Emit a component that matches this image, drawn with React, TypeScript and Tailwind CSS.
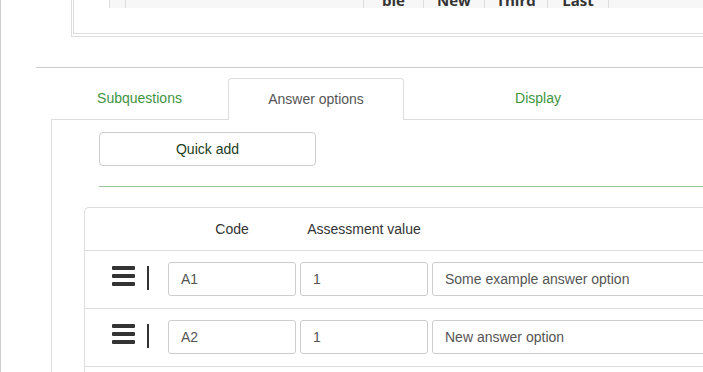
import React from "react"

const headCols = [
  { w: "w-[16px]", label: "" },
  { w: "w-[238px]", label: "" },
  { w: "w-[60px]", label: "ble" },
  { w: "w-[61px]", label: "New" },
  { w: "w-[63px]", label: "Third" },
  { w: "w-[61px]", label: "Last" },
]

const rows = [
  { code: "A1", value: "1", text: "Some example answer option" },
  { code: "A2", value: "1", text: "New answer option" },
]

function DragHandle() {
  return (
    <div className="flex items-center shrink-0 w-[79px] pl-[27px] gap-[12px]">
      <div className="flex flex-col gap-[4px] w-[23px]">
        <div className="h-[4px] bg-[#333] rounded-[1px]" />
        <div className="h-[4px] bg-[#333] rounded-[1px]" />
        <div className="h-[4px] bg-[#333] rounded-[1px]" />
      </div>
      <div className="w-[2px] h-[24px] bg-[#333] mt-[4px]" />
    </div>
  )
}

function Field({ value, width }: { value: string; width: string }) {
  return (
    <div
      className={`${width} h-[34px] shrink-0 border border-[#ccc] rounded-[3px] px-[12px] flex items-center text-[14px] text-[#555]`}
    >
      {value}
    </div>
  )
}

export default function App() {
  return (
    <div className="w-[703px] h-[372px] overflow-hidden bg-white border-l border-[#ccc] font-['Liberation_Sans',Arial,sans-serif]">
      {/* top question table box */}
      <div className="ml-[70px] h-[37px] border-l border-b border-[#ddd] pl-px pb-[2px]">
        <div className="h-full border-l border-b border-[#ddd] flex">
          <div className="w-[35px] shrink-0" />
          <div className="flex-1 h-[8px] overflow-hidden bg-[#f7f7f7] flex font-['Open_Sans',sans-serif] font-bold text-[15px] text-[#333]">
            {headCols.map((c, i) => (
              <div
                key={i}
                className={`${c.w} shrink-0 h-full border-l border-[#ddd] flex items-end justify-center leading-none`}
              >
                {c.label}
              </div>
            ))}
            <div className="flex-1 border-l border-[#ddd]" />
          </div>
        </div>
      </div>

      <div className="ml-[35px] mt-[30px] border-t border-[#ccc]" />

      {/* tabs */}
      <div className="ml-[50px] mt-[10px] flex h-[42px] text-[14px]">
        <div className="w-[177px] border-b border-[#ddd] flex items-center justify-center text-[#3f943f]">
          Subquestions
        </div>
        <div className="w-[176px] border border-b-0 border-[#ddd] rounded-t-[4px] flex items-center justify-center text-[#555] bg-white">
          Answer options
        </div>
        <div className="w-[268px] border-b border-[#ddd] flex items-center justify-center text-[#3f943f]">
          Display
        </div>
        <div className="flex-1 border-b border-[#ddd]" />
      </div>

      {/* tab panel */}
      <div className="ml-[50px] border-l border-[#ddd] h-[260px] pt-[12px]">
        <div className="ml-[47px]">
          <button className="w-[217px] h-[34px] border border-[#ccc] rounded-[4px] bg-white text-[14px] text-[#1b3d20] flex items-center justify-center">
            Quick add
          </button>
          <div className="mt-[20px] border-t border-[#9cc49c]" />
        </div>

        <div className="ml-[32px] mt-[20px] min-h-[200px] border-l border-t border-[#ddd] rounded-tl-[5px]">
          <div className="h-[43px] flex items-center border-b border-[#ddd] text-[14px] text-[#333]">
            <div className="w-[83px] shrink-0" />
            <div className="w-[128px] shrink-0 text-center">Code</div>
            <div className="w-[4px] shrink-0" />
            <div className="w-[128px] shrink-0 text-center">Assessment value</div>
          </div>
          {rows.map((r) => (
            <div key={r.code} className="h-[58px] flex items-start pt-[11px] gap-[4px] border-b border-[#ddd]">
              <DragHandle />
              <Field value={r.code} width="w-[128px]" />
              <Field value={r.value} width="w-[128px]" />
              <Field value={r.text} width="w-[320px]" />
            </div>
          ))}
        </div>
      </div>
    </div>
  )
}
